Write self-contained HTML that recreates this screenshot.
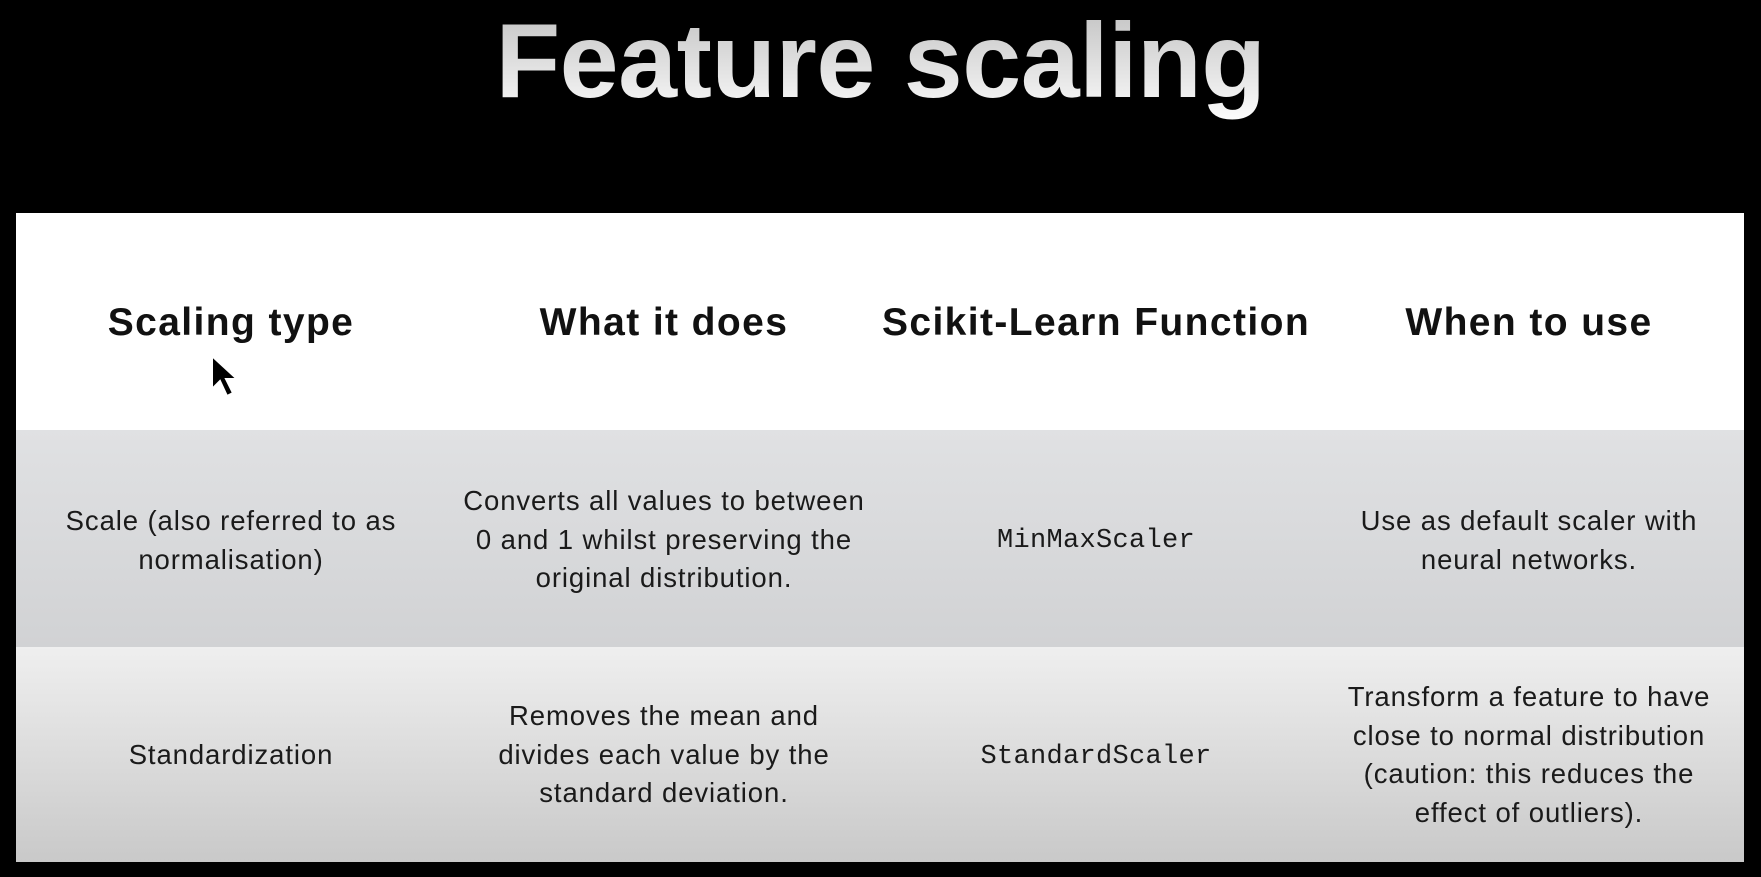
<!DOCTYPE html>
<html><head><style>
html,body{margin:0;padding:0;background:#000;width:1761px;height:877px;overflow:hidden;font-family:"Liberation Sans",sans-serif;}
.title{position:absolute;left:0;width:1761px;top:-4px;text-align:center;font-size:106px;font-weight:bold;line-height:130px;letter-spacing:-0.5px;background:linear-gradient(#bdbdbd,#ffffff);-webkit-background-clip:text;background-clip:text;color:transparent;}
.tbl{position:absolute;left:16px;top:213px;width:1728px;height:649px;}
.hdr{position:absolute;left:0;top:0;width:100%;height:217px;background:#fff;}
.r1{position:absolute;left:0;top:217px;width:100%;height:217px;background:linear-gradient(#e0e1e3,#d1d2d4);}
.r2{position:absolute;left:0;top:434px;width:100%;height:215px;background:linear-gradient(#efefef,#c9c9c9);}
.c{position:absolute;width:420px;text-align:center;color:#111;}
.h{font-weight:bold;font-size:39px;top:87px;line-height:46px;letter-spacing:1.4px;}
.b{font-size:27.5px;line-height:38.5px;color:#1a1a1a;letter-spacing:0.9px;}
.m{font-family:"Liberation Mono",monospace;font-size:27px;letter-spacing:0.3px;}
</style></head><body>
<div class="title">Feature scaling</div>
<div class="tbl">
<div class="hdr">
<div class="c h" style="left:5px">Scaling type</div>
<div class="c h" style="left:438px">What it does</div>
<div class="c h" style="width:460px;left:850px">Scikit-Learn Function</div>
<div class="c h" style="left:1303px">When to use</div>
<svg style="position:absolute;left:192px;top:140px" width="36" height="50" viewBox="0 0 36 50"><path d="M4 3 L4 36 L12 28 L19 43 L25 40 L18 26 L29 26 Z" fill="#000" stroke="#fff" stroke-width="2"/></svg>
</div>
<div class="r1">
<div class="c b" style="left:-5px;width:440px;top:72px">Scale (also referred to as<br>normalisation)</div>
<div class="c b" style="left:428px;width:440px;top:52px">Converts all values to between<br>0 and 1 whilst preserving the<br>original distribution.</div>
<div class="c b m" style="left:870px;top:92px;letter-spacing:0.3px">MinMaxScaler</div>
<div class="c b" style="left:1293px;width:440px;top:72px">Use as default scaler with<br>neural networks.</div>
</div>
<div class="r2">
<div class="c b" style="left:5px;top:89px">Standardization</div>
<div class="c b" style="left:438px;top:50px">Removes the mean and<br>divides each value by the<br>standard deviation.</div>
<div class="c b m" style="left:870px;top:91px;letter-spacing:0.3px">StandardScaler</div>
<div class="c b" style="left:1283px;width:460px;top:31px">Transform a feature to have<br>close to normal distribution<br>(caution: this reduces the<br>effect of outliers).</div>
</div>
</div>
</body></html>
